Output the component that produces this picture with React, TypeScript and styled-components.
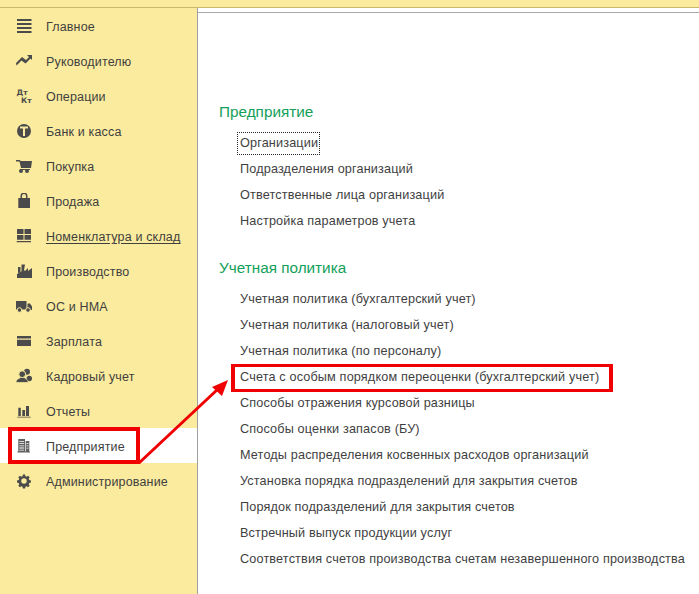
import React from "react";
import styled, { createGlobalStyle } from "styled-components";

const GlobalStyle = createGlobalStyle`
  html, body {
    margin: 0;
    padding: 0;
    height: 100%;
    background: #fff;
    overflow: hidden;
  }
  #root {
    height: 100%;
  }
`;

const Page = styled.div`
  position: relative;
  display: flex;
  flex-direction: column;
  width: 699px;
  height: 594px;
  overflow: hidden;
  font-family: "Liberation Sans", Arial, sans-serif;
  color: #3f3f3f;
`;

const TopBar = styled.div`
  flex: none;
  height: 7px;
  background: #fbeb9e;
  border-bottom: 1px solid #c9b66b;
`;

const Body = styled.div`
  flex: 1;
  display: flex;
  min-height: 0;
`;

const Sidebar = styled.nav`
  flex: none;
  width: 197px;
  background: #fbeb9e;
  border-right: 1px solid #a0a0a0;
`;

const MenuRow = styled.div<{ $active?: boolean }>`
  box-sizing: border-box;
  display: flex;
  align-items: center;
  height: 35px;
  padding: 1px 0 0 16px;
  background: ${(p) => (p.$active ? "#fff" : "transparent")};
`;

const MenuIcon = styled.svg<{ $active?: boolean }>`
  flex: none;
  width: 16px;
  height: 16px;
  margin-right: 14px;
  fill: ${(p) => (p.$active ? "#606060" : "#4b4b4b")};
`;

const MenuLabel = styled.span<{ $current?: boolean }>`
  padding-top: 2px;
  font-size: 12.5px;
  letter-spacing: 0.16px;
  white-space: nowrap;
  text-decoration: ${(p) => (p.$current ? "underline" : "none")};
  text-underline-offset: 2px;
`;

const Content = styled.main`
  flex: 1;
  min-width: 0;
  padding-top: 4px;
`;

const ContentRule = styled.div`
  height: 1px;
  background: #a8a8a8;
`;

const Sections = styled.div`
  padding: 88px 0 0 21px;
`;

const SectionTitle = styled.h2`
  margin: 0 0 7px;
  height: 22px;
  line-height: 22px;
  font-size: 15.3px;
  font-weight: 400;
  color: #13a05a;
`;

const LinkList = styled.ul`
  list-style: none;
  margin: 0 0 23px;
  padding: 0 0 0 21px;
`;

const LinkItem = styled.li`
  height: 26px;
  line-height: 26px;
  font-size: 12.67px;
  letter-spacing: 0.15px;
  white-space: nowrap;
  color: #3f3f3f;
`;

const FocusText = styled.span`
  outline: 1px dotted #222;
  padding: 3px 1px 4px 2px;
  margin-left: -2px;
`;

const RedBox = styled.div<{ $x: number; $y: number; $w: number; $h: number; $edge: number }>`
  position: absolute;
  left: ${(p) => p.$x}px;
  top: ${(p) => p.$y}px;
  width: ${(p) => p.$w}px;
  height: ${(p) => p.$h}px;
  box-sizing: border-box;
  border: solid #f00000;
  border-width: ${(p) => p.$edge}px 4px;
`;

const ArrowLayer = styled.svg`
  position: absolute;
  left: 0;
  top: 0;
  pointer-events: none;
`;

const YELLOW = "#fbeb9e";

const icons: Record<string, React.ReactNode> = {
  main: <path d="M1 1h14.500v2H1zM1 5h14.500v2H1zM1 9h14.500v2H1zM1 13h14.500v2H1z" />,
  chart: <path d="M0 10l6-6 4 3 3-3-2-2h5.500v5.500l-2-2-5 5-4-3-5 5z" />,
  debit: (
    <>
      <text x="0.500" y="7" fontSize="7.500" fontWeight="700" fontFamily="DejaVu Sans">Дт</text>
      <text x="5" y="15" fontSize="7.500" fontWeight="700" fontFamily="DejaVu Sans">Кт</text>
    </>
  ),
  bank: (
    <path
      fillRule="evenodd"
      d="M8 1a7 7 0 1 1 0 14A7 7 0 0 1 8 1zM4 3.500v2h3V13h2V5.500h3v-2z"
    />
  ),
  cart: (
    <>
      <path d="M0 2h4l.5 1H16l-1 7H5L3.500 3.500H0zM4 11h10v1H4z" />
      <circle cx="5" cy="13" r="2" />
      <circle cx="11" cy="13" r="2" />
    </>
  ),
  bag: (
    <path
      fillRule="evenodd"
      d="M2.300 5h2.200V3a3.500 3.500 0 0 1 7 0v2H14v10H2.300zM6 5h4V3a2 2 0 0 0-4 0z"
    />
  ),
  stock: <path d="M1 1h6.500v5H1zM8.500 1H15v5H8.500zM1 7h6.500v4.700H1zM8.500 7H15v4.700H8.500zM.7 13H15v1.300H.7z" />,
  factory: <path d="M2 4h2.500v5L2 10zM5.500 1.500H9L8 7 5.500 8.500zM1 15v-4l7-4 1 1 3-3v3l4-3v10z" />,
  truck: (
    <>
      <path d="M0 3h10.500v8.500H0zM11.500 5.500H14l2 3V12h-4.500z" />
      <circle cx="3.500" cy="12" r="2.300" stroke={YELLOW} />
      <circle cx="12" cy="12" r="2.300" stroke={YELLOW} />
    </>
  ),
  card: <path d="M1 3h14v2.500H1zM1 6.800h14V13H1z" />,
  people: (
    <>
      <circle cx="11" cy="3.800" r="3" />
      <circle cx="13.300" cy="10.500" r="2.700" />
      <circle cx="6.200" cy="6.200" r="3.400" stroke={YELLOW} />
      <path d="M0 14.500c0-3.500 3-3.500 4.200-5h4c1.200 1.500 4 1.500 4 5z" stroke={YELLOW} strokeWidth="0.700" />
    </>
  ),
  bars: <path d="M2.300 4.700h2.500V13H2.300zM6.300 7H9v6H6.300zM10 3h3v10h-3zM1.300 13.700h13.400v.9H1.300z" />,
  building: (
    <path
      fillRule="evenodd"
      d="M2.300 1H9v12.500H2.300zM3.300 3v.8h4.800V3zM3.300 5.200V6h4.800v-.8zM3.300 7.400v.8h4.800v-.8zM3.300 9.600v.8h4.800v-.8zM3.300 11.800v.8h4.800v-.8zM9.700 3h3.600v10.500H9.700zM10.500 5v.8h2V5zM10.500 7.400v.8h2v-.8zM10.500 9.800v.8h2v-.8zM1.300 13.600H14v1H1.300z"
    />
  ),
  gear: (
    <g transform="translate(1.100 1.100) scale(.86)">
      <path
        fillRule="evenodd"
        d="M6.700.5h2.600l.4 2 1.400.6 1.700-1.100 1.800 1.800-1.100 1.700.6 1.400 2 .4v2.600l-2 .4-.6 1.400 1.100 1.700-1.800 1.800-1.700-1.100-1.400.6-.4 2H6.700l-.4-2-1.400-.6-1.700 1.100-1.800-1.800 1.100-1.700-.6-1.400-2-.4V7.300l2-.4.6-1.400-1.100-1.700 1.800-1.800 1.700 1.100 1.400-.6zM8 4.800a3.200 3.200 0 1 0 0 6.400 3.200 3.200 0 0 0 0-6.400z"
      />
    </g>
  ),
};

const menu = [
  { icon: "main", label: "Главное" },
  { icon: "chart", label: "Руководителю" },
  { icon: "debit", label: "Операции" },
  { icon: "bank", label: "Банк и касса" },
  { icon: "cart", label: "Покупка" },
  { icon: "bag", label: "Продажа" },
  { icon: "stock", label: "Номенклатура и склад", current: true },
  { icon: "factory", label: "Производство" },
  { icon: "truck", label: "ОС и НМА" },
  { icon: "card", label: "Зарплата" },
  { icon: "people", label: "Кадровый учет" },
  { icon: "bars", label: "Отчеты" },
  { icon: "building", label: "Предприятие", active: true },
  { icon: "gear", label: "Администрирование" },
];

const companyLinks = [
  "Подразделения организаций",
  "Ответственные лица организаций",
  "Настройка параметров учета",
];

const policyLinks = [
  "Учетная политика (бухгалтерский учет)",
  "Учетная политика (налоговый учет)",
  "Учетная политика (по персоналу)",
  "Счета с особым порядком переоценки (бухгалтерский учет)",
  "Способы отражения курсовой разницы",
  "Способы оценки запасов (БУ)",
  "Методы распределения косвенных расходов организаций",
  "Установка порядка подразделений для закрытия счетов",
  "Порядок подразделений для закрытия счетов",
  "Встречный выпуск продукции услуг",
  "Соответствия счетов производства счетам незавершенного производства",
];

export default function App() {
  return (
    <Page>
      <GlobalStyle />
      <TopBar />
      <Body>
        <Sidebar>
          {menu.map((m) => (
            <MenuRow key={m.label} $active={m.active}>
              <MenuIcon viewBox="0 0 16 16" $active={m.active}>
                {icons[m.icon]}
              </MenuIcon>
              <MenuLabel $current={m.current}>{m.label}</MenuLabel>
            </MenuRow>
          ))}
        </Sidebar>
        <Content>
          <ContentRule />
          <Sections>
            <SectionTitle>Предприятие</SectionTitle>
            <LinkList>
              <LinkItem>
                <FocusText>Организации</FocusText>
              </LinkItem>
              {companyLinks.map((l) => (
                <LinkItem key={l}>{l}</LinkItem>
              ))}
            </LinkList>
            <SectionTitle>Учетная политика</SectionTitle>
            <LinkList>
              {policyLinks.map((l) => (
                <LinkItem key={l}>{l}</LinkItem>
              ))}
            </LinkList>
          </Sections>
        </Content>
      </Body>
      <RedBox $x={8} $y={427} $w={132} $h={37} $edge={4} />
      <RedBox $x={231} $y={364} $w={382} $h={28} $edge={3} />
      <ArrowLayer width="699" height="594">
        <line x1="139" y1="463" x2="218" y2="389" stroke="#f00000" strokeWidth="3" />
        <path d="M228 380L222 396 212 387z" fill="#f00000" />
      </ArrowLayer>
    </Page>
  );
}
